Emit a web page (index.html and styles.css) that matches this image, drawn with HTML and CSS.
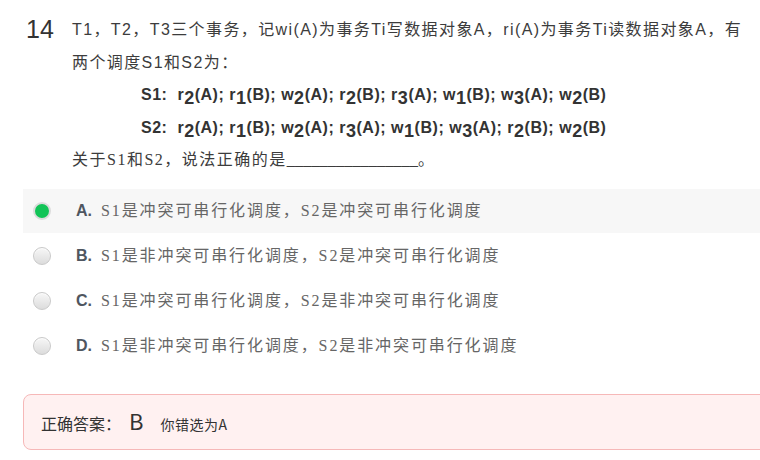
FILE: index.html
```html
<!DOCTYPE html>
<html lang="zh-CN">
<head>
<meta charset="utf-8">
<title>14</title>
<link rel="stylesheet" href="styles.css">
</head>
<body>
<div class="page">
  <div class="question">
    <div class="qnum">14</div>
    <div class="qbody">
      <p class="qline">T1，T2，T3三个事务，记wi(A)为事务Ti写数据对象A，ri(A)为事务Ti读数据对象A，有</p>
      <p class="qline">两个调度S1和S2为：</p>
      <p class="sched">S1:&nbsp; r<span class="sub">2</span>(A); r<span class="sub">1</span>(B); w<span class="sub">2</span>(A); r<span class="sub">2</span>(B); r<span class="sub">3</span>(A); w<span class="sub">1</span>(B); w<span class="sub">3</span>(A); w<span class="sub">2</span>(B)</p>
      <p class="sched">S2:&nbsp; r<span class="sub">2</span>(A); r<span class="sub">1</span>(B); w<span class="sub">2</span>(A); r<span class="sub">3</span>(A); w<span class="sub">1</span>(B); w<span class="sub">3</span>(A); r<span class="sub">2</span>(B); w<span class="sub">2</span>(B)</p>
      <p class="serifline">关于S1和S2，说法正确的是<span class="blank">________________</span>。</p>
    </div>
  </div>

  <ul class="options">
    <li class="option selected">
      <span class="radio checked"></span>
      <span class="content"><span class="label">A.</span><span class="otext">S1是冲突可串行化调度，S2是冲突可串行化调度</span></span>
    </li>
    <li class="option">
      <span class="radio"></span>
      <span class="content"><span class="label">B.</span><span class="otext">S1是非冲突可串行化调度，S2是冲突可串行化调度</span></span>
    </li>
    <li class="option">
      <span class="radio"></span>
      <span class="content"><span class="label">C.</span><span class="otext">S1是冲突可串行化调度，S2是非冲突可串行化调度</span></span>
    </li>
    <li class="option">
      <span class="radio"></span>
      <span class="content"><span class="label">D.</span><span class="otext">S1是非冲突可串行化调度，S2是非冲突可串行化调度</span></span>
    </li>
  </ul>

  <div class="answer">
    <span class="ans-title">正确答案：</span><span class="ans-letter">B</span><span class="ans-note">你错选为A</span>
  </div>
</div>
</body>
</html>
```

FILE: styles.css
```css
html, body {
  margin: 0;
  padding: 0;
  background: #ffffff;
  overflow: hidden;
}

.page {
  width: 760px;
  padding-top: 14px;
  font-family: "Liberation Sans", "Noto Sans CJK SC", sans-serif;
  color: #333;
}

.question {
  display: flex;
  align-items: flex-start;
}

.qnum {
  width: 46px;
  padding-left: 26px;
  box-sizing: content-box;
  font-family: "Liberation Sans", Arial, sans-serif;
  font-size: 25px;
  line-height: 31px;
  color: #333;
}

.qbody {
  flex: 1;
}

.qbody p {
  margin: 0;
  height: 32.5px;
  line-height: 32.5px;
  white-space: nowrap;
}

.qline {
  font-size: 16px;
  letter-spacing: 1.4px;
  color: #3c3c3c;
}

.sched {
  padding-left: 69px;
  font-size: 16px;
  font-weight: bold;
  color: #333;
  letter-spacing: 0.52px;
}

.sub {
  font-size: 18px;
  line-height: 0;
  vertical-align: -4px;
}

.serifline {
  font-family: "Liberation Serif", "Noto Sans CJK SC", serif;
  font-size: 16px;
  letter-spacing: 1.5px;
  color: #3c3c3c;
}

.blank {
  letter-spacing: 0;
  font-size: 16.4px;
}

.options {
  list-style: none;
  margin: 12px 0 0 23px;
  padding: 0;
  width: 760px;
  display: flex;
  flex-direction: column;
  gap: 1px;
}

.option {
  display: flex;
  align-items: center;
  height: 44px;
  padding-left: 10px;
}

.option.selected {
  background: #f7f7f7;
}

.radio {
  width: 16px;
  height: 16px;
  border-radius: 50%;
  border: 1px solid #c9c9c9;
  background: linear-gradient(#f7f7f7, #dcdcdc);
  box-shadow: inset 0 1px 1px rgba(255, 255, 255, 0.8);
  flex: none;
}

.radio.checked {
  background: #12c457;
  border: 2px solid #dcdcdc;
  width: 14px;
  height: 14px;
  box-shadow: none;
}

.content {
  margin-left: 25px;
  white-space: nowrap;
  line-height: 24px;
}

.label {
  display: inline-block;
  width: 25px;
  font-family: "Liberation Sans", Arial, sans-serif;
  font-weight: bold;
  font-size: 16px;
  color: #4f5660;
}

.otext {
  font-family: "Liberation Serif", "Noto Sans CJK SC", serif;
  font-size: 16px;
  letter-spacing: 1.9px;
  color: #666;
}

.answer {
  margin: 26px 0 0 23px;
  width: 760px;
  height: 54px;
  box-sizing: content-box;
  border: 1px solid #f6b8b8;
  border-radius: 8px;
  background: #fff1f1;
  padding-left: 17px;
  display: flex;
  align-items: baseline;
  line-height: 50px;
  font-family: "Noto Sans CJK SC", sans-serif;
  color: #333;
}

.ans-title {
  font-size: 16px;
}

.ans-letter {
  font-size: 22px;
  margin-left: 8px;
  margin-right: 17px;
}

.ans-note {
  font-size: 14px;
  letter-spacing: 0.5px;
}
```
